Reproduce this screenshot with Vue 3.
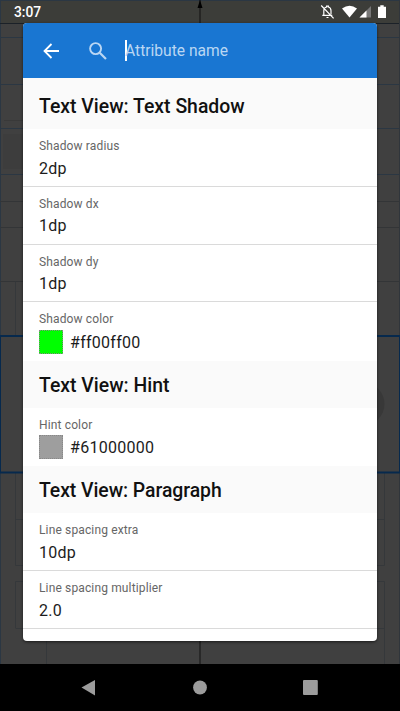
<script setup>
const sections = [
  {
    title: 'Text View: Text Shadow',
    rows: [
      { label: 'Shadow radius', value: '2dp' },
      { label: 'Shadow dx', value: '1dp' },
      { label: 'Shadow dy', value: '1dp' },
      { label: 'Shadow color', value: '#ff00ff00', swatch: '#00ff00' },
    ],
  },
  {
    title: 'Text View: Hint',
    rows: [{ label: 'Hint color', value: '#61000000', swatch: '#9e9e9e' }],
  },
  {
    title: 'Text View: Paragraph',
    rows: [
      { label: 'Line spacing extra', value: '10dp' },
      { label: 'Line spacing multiplier', value: '2.0' },
    ],
  },
]
</script>

<template>
  <div class="screen">
    <svg class="backdrop" viewBox="0 0 400 711" width="400" height="711" fill="none">
      <rect width="400" height="664" fill="#404040" />
      <rect width="400" height="23" fill="#3c3d39" />
      <g stroke="#2b3743">
        <path d="M0 .5H400M.5 0V664M0 37.5H400M0 84.5H400M0 128.5H400M0 174.5H400" />
        <path d="M0 23.5H400" stroke="#1b2128" />
      </g>
      <path d="M399.5 0V664" stroke="#30353b" />
      <path d="M0 201.5H400M0 227.5H400M0 281.5H400" stroke="#333537" />
      <rect x="3" y="134" width="30" height="35" fill="#3d3d3d" />
      <path d="M4 120.5H24" stroke="#393939" />
      <path d="M15.5 336V281.5M15.5 472V565.5H384.5V472M15.5 519.5H384.5M15.5 628V581.5H384.5V664M15.5 628.5H384.5M46.5 628V664" stroke="#35383b" />
      <circle cx="363" cy="404" r="21.5" fill="#383838" />
      <path d="M0 336H400M0 472.5H400" stroke="#06294d" stroke-width="2" />
      <path d="M.5 336V472M399.5 336V472" stroke="#06294d" />
      <path d="M200 0V664" stroke="#111" />
      <path d="M200 0L197.5 8H202.5Z" fill="#000" />
      <rect y="664" width="400" height="47" fill="#000" />
    </svg>

    <header class="status">
      <span>3:07</span>
      <svg width="68" height="20" viewBox="0 0 68 20" fill="none">
        <path d="M3.8 12.8V8.8C3.8 6.8 5 5.4 6.6 5V4.2H8.4V5C10 5.4 11 6.8 11 8.8V12.3M2.3 13.3H12.3M6.5 15.5H8.5M1.2 3.5L13.6 16.3" stroke="#fff" stroke-width="1.2" />
        <path d="M22 6.500Q29.600 .8 37 6.500L29.500 15.500Z" fill="#fff" />
        <path d="M51 4V15.500H39.500Z" fill="#777" />
        <path d="M46.500 8.500V15.500H39.500Z" fill="#fff" />
        <path d="M58 4.700H60.300V3.300H63.700V4.700H66V16H58Z" fill="#fff" />
      </svg>
    </header>

    <main class="dialog">
      <div class="search">
        <svg width="16" height="16" viewBox="0 0 16 16" fill="none">
          <path d="M16 8H2M8.500 1L1.500 8L8.500 15" stroke="#fff" stroke-width="1.800" />
        </svg>
        <svg class="lens" width="18" height="18" viewBox="0 0 18 18" fill="none">
          <circle cx="6.600" cy="6.600" r="5.500" stroke="#bad6f3" stroke-width="1.900" />
          <path d="M10.700 10.700L17 17" stroke="#bad6f3" stroke-width="2.200" />
        </svg>
        <div class="field">Attribute name</div>
      </div>
      <section v-for="s in sections" :key="s.title">
        <h2>{{ s.title }}</h2>
        <div v-for="r in s.rows" :key="r.label" class="row" :class="{ color: r.swatch }">
          <div class="label">{{ r.label }}</div>
          <div class="value">
            <i v-if="r.swatch" class="swatch" :style="{ backgroundColor: r.swatch }"></i>
            <span>{{ r.value }}</span>
          </div>
        </div>
      </section>
    </main>

    <nav class="nav">
      <svg width="400" height="47" viewBox="0 0 400 47" fill="#9c9c9c">
        <path d="M81.500 23.500L95 16V31.500Z" />
        <circle cx="200" cy="23.500" r="6.900" />
        <rect x="303" y="16" width="14.800" height="15" rx="1" />
      </svg>
    </nav>
  </div>
</template>

<style>
body {
  margin: 0;
  background: #000;
}
</style>

<style scoped>
.screen {
  position: relative;
  width: 400px;
  height: 711px;
  overflow: hidden;
  display: flex;
  flex-direction: column;
  font-family: Roboto, "Liberation Sans", sans-serif;
}
.backdrop {
  position: absolute;
  inset: 0;
}
.status {
  position: relative;
  height: 23px;
  box-sizing: border-box;
  padding: 2px 12px 0 14px;
  display: flex;
  justify-content: space-between;
  align-items: flex-start;
  color: #fff;
  font-size: 13.8px;
  font-weight: 500;
  line-height: 21px;
}
.dialog {
  position: relative;
  height: 618px;
  margin: 0 23px;
  width: 354px;
  border-radius: 4px;
  overflow: hidden;
  background: #fff;
  box-shadow: 0 1px 3px rgba(0, 0, 0, 0.6);
}
.search {
  height: 55px;
  box-sizing: border-box;
  padding-left: 20px;
  display: flex;
  align-items: center;
  background: #1976d2;
}
.lens {
  margin-left: 30px;
}
.field {
  margin-left: 18px;
  height: 21px;
  line-height: 23px;
  box-shadow: inset 2px 0 #fff;
  color: #bad6f3;
  font-size: 15.6px;
}
h2 {
  margin: 0;
  height: 47px;
  line-height: 50px;
  padding-left: 16px;
  background: #fafafa;
  color: #111;
  font-size: 19.4px;
  font-weight: 500;
}
section:first-of-type h2 {
  padding-top: 4px;
}
section:last-of-type h2 {
  letter-spacing: -0.06px;
}
.row {
  height: 57.75px;
  box-sizing: border-box;
  padding: 8px 16px 0;
  border-bottom: 1px solid #dadada;
}
.row.color {
  height: 58.5px;
  border-bottom: 0;
}
.label {
  height: 16px;
  line-height: 18px;
  color: #666;
  font-size: 12px;
  letter-spacing: 0.14px;
}
.value {
  height: 24px;
  margin-top: 3px;
  display: flex;
  align-items: center;
  color: #1c1c1c;
  font-size: 16px;
  letter-spacing: 0.28px;
}
.color .value {
  margin-top: 4px;
}
.swatch {
  width: 24px;
  height: 24px;
  box-sizing: border-box;
  margin: -1px 7px 0 0;
  border: 1px dotted #888;
}
.nav {
  position: relative;
  margin-top: auto;
  height: 47px;
}
.nav svg {
  display: block;
}
</style>
